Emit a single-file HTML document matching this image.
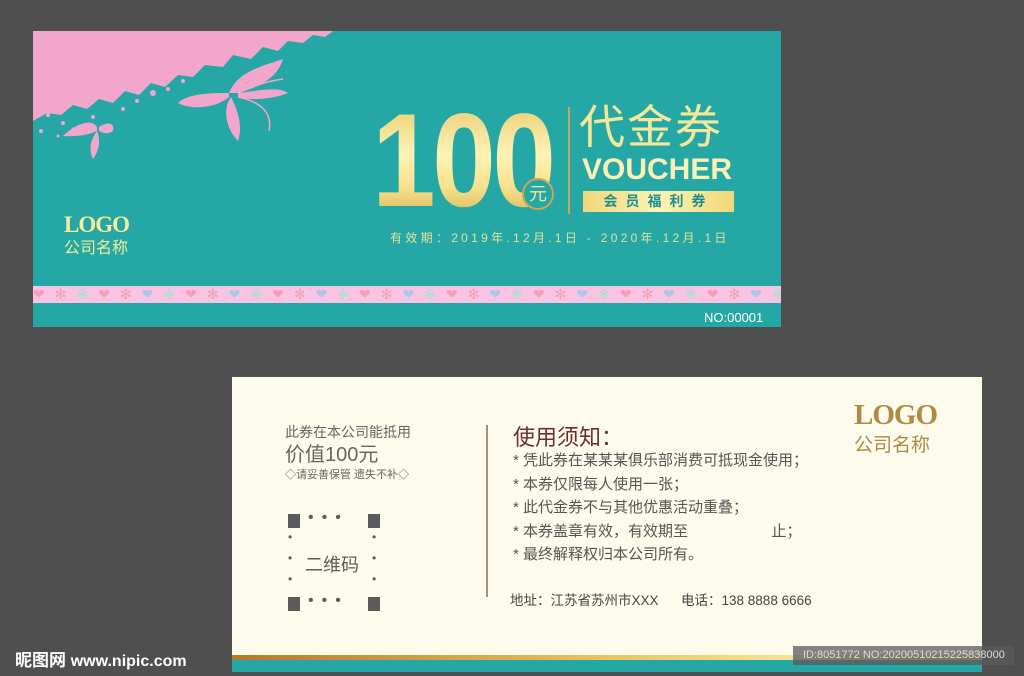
<!DOCTYPE html>
<html><head><meta charset="utf-8"><style>
*{margin:0;padding:0;box-sizing:border-box}
body{width:1024px;height:676px;background:#4f4f4f;position:relative;overflow:hidden;font-family:"Liberation Sans","Noto Sans CJK SC",sans-serif}
.a{position:absolute}
.gold{background:linear-gradient(180deg,#e8c868 0%,#fdf3b5 45%,#f7e08a 70%,#c9a94e 100%);-webkit-background-clip:text;background-clip:text;color:transparent}
</style></head><body>
<div class="a" style="left:33px;top:31px;width:748px;height:296px;background:#25a7a5;overflow:hidden">
<svg class="a" style="left:0;top:0" width="340" height="140" viewBox="0 0 340 140">
<path d="M0 0 H300 L292 6 L280 4 L270 12 L255 10 L245 20 L230 16 L218 28 L200 24 L190 36 L172 34 L160 46 L145 44 L132 56 L118 52 L106 64 L92 60 L80 72 L66 68 L54 78 L40 74 L28 84 L14 82 L0 90 Z" fill="#f3a6cc"/>
<g fill="#f3a6cc"><circle cx="120" cy="62" r="3"/><circle cx="135" cy="58" r="2"/><circle cx="104" cy="70" r="2"/><circle cx="90" cy="78" r="2"/><circle cx="60" cy="86" r="2"/><circle cx="150" cy="50" r="2"/><circle cx="30" cy="92" r="2"/><circle cx="15" cy="84" r="2"/><circle cx="8" cy="100" r="2"/><circle cx="40" cy="98" r="1.5"/><circle cx="25" cy="105" r="1.5"/></g>
<path d="M196 62 C205 40 230 35 250 28 C245 45 230 55 205 62 Z M205 62 C225 60 245 55 255 62 C240 68 220 70 205 66 Z M196 62 C180 62 155 62 145 72 C160 80 185 76 196 66 Z M198 66 C188 80 195 100 205 110 C210 95 205 80 198 66 Z" fill="#f3a6cc"/>
<path d="M205 66 C225 70 240 80 236 100 M205 62 C220 55 235 50 250 48" stroke="#f3a6cc" stroke-width="1.5" fill="none"/>
<path d="M64 96 C58 86 40 95 30 105 C42 106 55 104 64 100 Z M64 100 C58 108 55 118 60 128 C66 120 68 110 64 100 Z M66 96 C75 90 82 92 80 100 C75 104 70 102 66 100 Z" fill="#f3a6cc"/>
</svg>
<div class="a" style="left:31px;top:181px;font-family:'Liberation Serif',serif;font-weight:bold;font-size:23px;color:#f5ec9c;letter-spacing:-1px">LOGO</div>
<div class="a" style="left:31px;top:203px;font-size:16px;color:#f5ec9c">公司名称</div>
<div class="a gold" style="left:339px;top:64px;font-size:133px;font-weight:bold;line-height:133px;letter-spacing:-4px;transform:scaleX(0.86);transform-origin:left;white-space:nowrap">100</div>
<div class="a" style="left:489px;top:147px;width:32px;height:32px;border-radius:50%;border:2px solid #c9a94e;background:#25a7a5;color:#f5e79a;font-size:18px;text-align:center;line-height:28px">元</div>
<div class="a" style="left:535px;top:76px;width:2px;height:107px;background:#c9a94e"></div>
<div class="a" style="left:546px;top:68px;font-size:46px;color:#f5e79a;letter-spacing:2px;line-height:56px">代金券</div>
<div class="a" style="left:549px;top:122px;font-size:30px;font-weight:bold;color:#fbf0b6;line-height:34px">VOUCHER</div>
<div class="a" style="left:550px;top:160px;width:151px;height:21px;background:linear-gradient(90deg,#f0d77a,#fdf3b5,#f0d77a);color:#1a8f8d;font-size:14px;text-align:center;line-height:21px;letter-spacing:8px;font-weight:bold">会员福利券</div>
<div class="a" style="left:357px;top:198px;font-size:12px;color:#e8e09a;letter-spacing:3.3px;white-space:nowrap">有效期：2019年.12月.1日 - 2020年.12月.1日</div>
<div class="a" style="left:0;top:255px;width:748px;height:17px;background:#f9c3e3;overflow:hidden;white-space:nowrap;font-size:14px;line-height:17px;letter-spacing:10px;color:#f3a0b6">❤<span style="color:#f5a0b0">✻</span><span style="color:#a8e0d0">✻</span>❤<span style="color:#f5a0b0">✻</span><span style="color:#a8c8e8">❤</span><span style="color:#a8e0d0">✻</span>❤<span style="color:#f5a0b0">✻</span><span style="color:#a8c8e8">❤</span><span style="color:#a8e0d0">✻</span>❤<span style="color:#f5a0b0">✻</span><span style="color:#a8c8e8">❤</span><span style="color:#a8e0d0">✻</span>❤<span style="color:#f5a0b0">✻</span><span style="color:#a8c8e8">❤</span><span style="color:#a8e0d0">✻</span>❤<span style="color:#f5a0b0">✻</span><span style="color:#a8c8e8">❤</span><span style="color:#a8e0d0">✻</span>❤<span style="color:#f5a0b0">✻</span><span style="color:#a8c8e8">❤</span><span style="color:#a8e0d0">✻</span>❤<span style="color:#f5a0b0">✻</span><span style="color:#a8c8e8">❤</span><span style="color:#a8e0d0">✻</span>❤<span style="color:#f5a0b0">✻</span><span style="color:#a8c8e8">❤</span><span style="color:#a8e0d0">✻</span>❤<span style="color:#f5a0b0">✻</span><span style="color:#a8c8e8">❤</span><span style="color:#a8e0d0">✻</span>❤<span style="color:#f5a0b0">✻</span><span style="color:#a8c8e8">❤</span><span style="color:#a8e0d0">✻</span>❤<span style="color:#f5a0b0">✻</span><span style="color:#a8c8e8">❤</span><span style="color:#a8e0d0">✻</span>❤<span style="color:#f5a0b0">✻</span></div>
<div class="a" style="left:671px;top:279px;font-size:13px;color:#fff">NO:00001</div>
</div>

<div class="a" style="left:232px;top:377px;width:750px;height:295px;background:#fdfbec;overflow:hidden">
<div class="a" style="left:53px;top:45px;font-size:14px;color:#666">此券在本公司能抵用</div>
<div class="a" style="left:53px;top:61px;font-size:20px;color:#666">价值100元</div>
<div class="a" style="left:53px;top:89px;font-size:11px;color:#666">◇请妥善保管 遗失不补◇</div>
<div class="a" style="left:56px;top:137px;width:12px;height:14px;background:#5b5b5b"></div>
<div class="a" style="left:136px;top:137px;width:12px;height:14px;background:#5b5b5b"></div>
<div class="a" style="left:56px;top:220px;width:12px;height:14px;background:#5b5b5b"></div>
<div class="a" style="left:136px;top:220px;width:12px;height:14px;background:#5b5b5b"></div>
<div class="a" style="left:76px;top:132px;font-size:16px;color:#5b5b5b;letter-spacing:8px">•••</div>
<div class="a" style="left:76px;top:215px;font-size:16px;color:#5b5b5b;letter-spacing:8px">•••</div>
<div class="a" style="left:56px;top:150px;font-size:12px;color:#5b5b5b;line-height:21px">•<br>•<br>•</div>
<div class="a" style="left:140px;top:150px;font-size:12px;color:#5b5b5b;line-height:21px">•<br>•<br>•</div>
<div class="a" style="left:73px;top:174px;font-size:18px;color:#5b5b5b">二维码</div>
<div class="a" style="left:254px;top:48px;width:2px;height:172px;background:#a89080"></div>
<div class="a" style="left:281px;top:43px;font-size:22px;color:#6e2e2e">使用须知：</div>
<div class="a" style="left:281px;top:72px;font-size:15px;color:#555;line-height:23.5px;white-space:nowrap">
* 凭此券在某某某俱乐部消费可抵现金使用；<br>* 本券仅限每人使用一张；<br>* 此代金券不与其他优惠活动重叠；<br>* 本券盖章有效，有效期至&nbsp;&nbsp;&nbsp;&nbsp;&nbsp;&nbsp;&nbsp;&nbsp;&nbsp;&nbsp;&nbsp;&nbsp;&nbsp;&nbsp;&nbsp;&nbsp;&nbsp;&nbsp;&nbsp;&nbsp;止；<br>* 最终解释权归本公司所有。</div>
<div class="a" style="left:278px;top:212px;font-size:13.5px;color:#444;white-space:nowrap">地址：江苏省苏州市XXX&nbsp;&nbsp;&nbsp;&nbsp;&nbsp;&nbsp;电话：138 8888 6666</div>
<div class="a" style="left:622px;top:22px;font-family:'Liberation Serif',serif;font-weight:bold;font-size:29px;color:#b08a45;letter-spacing:-1px">LOGO</div>
<div class="a" style="left:622px;top:53px;font-size:19px;color:#b08a45">公司名称</div>
<div class="a" style="left:0;top:278px;width:750px;height:5px;background:linear-gradient(90deg,#b5782a,#e7c464 50%,#fbeaa0 80%,#e7c464)"></div>
<div class="a" style="left:0;top:283px;width:750px;height:12px;background:#25a7a5"></div>
</div>
<div class="a" style="left:793px;top:646px;width:221px;height:19px;background:rgba(90,90,90,.75);color:#ddd;font-size:11px;line-height:19px;padding-left:10px;white-space:nowrap">ID:8051772 NO:20200510215225838000</div>
<div class="a" style="left:15px;top:646px;font-size:17px;color:#fff;font-weight:bold;white-space:nowrap">昵图网 <span style="font-size:16px">www.nipic.com</span></div>
</body></html>
